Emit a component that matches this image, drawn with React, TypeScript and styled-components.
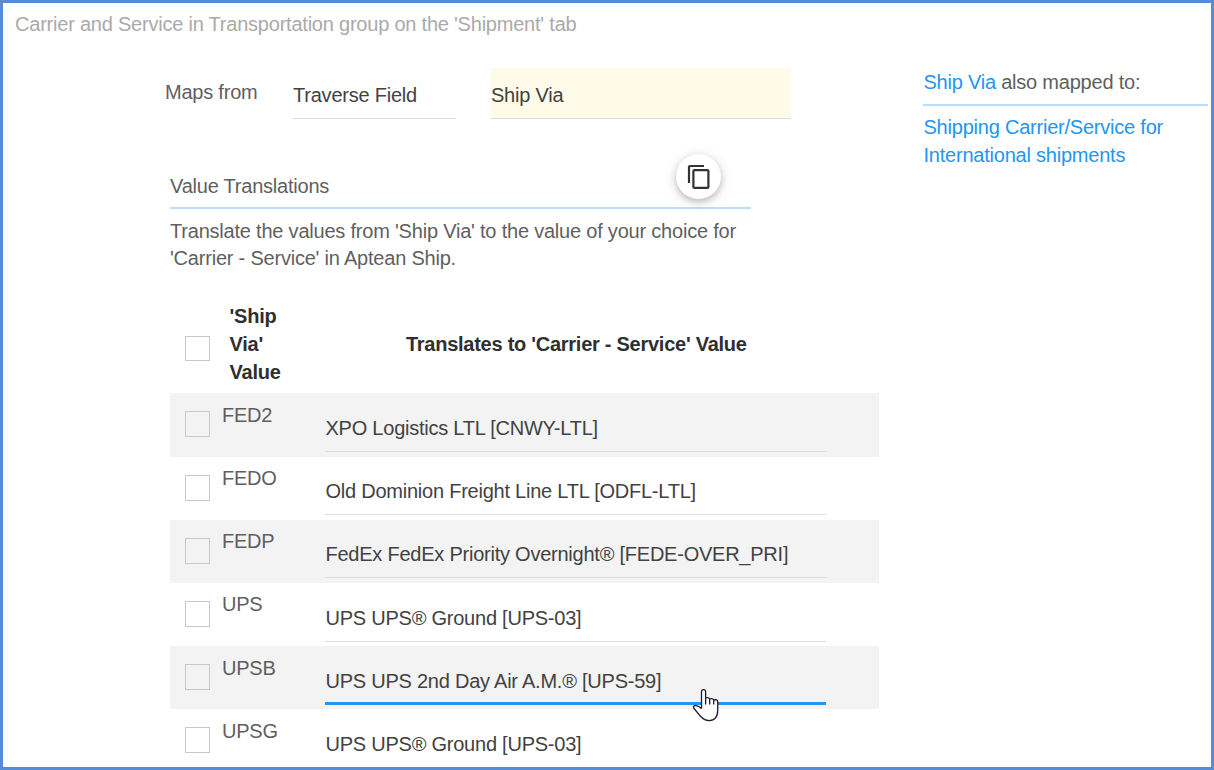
import React from "react";
import styled, { createGlobalStyle } from "styled-components";

const GlobalStyle = createGlobalStyle`
  *, *::before, *::after { box-sizing: border-box; }
  body {
    margin: 0;
    overflow: hidden;
    background: #fff;
    color: #5f5f5f;
    font: 20px/28px "Liberation Sans", Arial, sans-serif;
    letter-spacing: -0.22px;
  }
`;

const Frame = styled.div`
  width: 1214px;
  height: 770px;
  border: 3px solid #548cd5;
  overflow: hidden;
  display: flex;
  flex-direction: column;
  position: relative;
`;

const Title = styled.div`
  padding: 7px 0 0 12px;
  height: 65px;
  flex: none;
  color: #aaa;
  white-space: nowrap;
`;

const Columns = styled.div`
  display: flex;
  align-items: flex-start;
`;

const Main = styled.main`
  width: 920px;
  flex: none;
`;

const MapsRow = styled.div`
  display: flex;
  padding-left: 162px;
`;

const MapsLabel = styled.div`
  width: 128px;
  padding-top: 10px;
`;

const Field = styled.div<{ $width: number; $highlight?: boolean }>`
  width: ${(p) => p.$width}px;
  height: 51px;
  padding-top: 13px;
  margin-right: 35px;
  color: #424242;
  background: ${(p) => (p.$highlight ? "#fffbe8" : "transparent")};
  border-bottom: 1px solid #dcdcdc;
`;

const Section = styled.section`
  margin: 35px 0 0 167px;
`;

const SectionHeader = styled.div`
  width: 581px;
  height: 55px;
  display: flex;
  justify-content: space-between;
  padding-right: 30px;
  border-bottom: 2px solid #bbdefb;
`;

const SectionTitle = styled.div`
  padding-top: 18px;
`;

const CopyButton = styled.button`
  width: 45px;
  height: 45px;
  border: 0;
  padding: 0;
  border-radius: 50%;
  background: #fff;
  display: grid;
  place-items: center;
  box-shadow: 0 3px 6px rgba(0, 0, 0, 0.2), 0 2px 14px rgba(0, 0, 0, 0.12);
`;

const Description = styled.p`
  margin: 9px 0 0;
  width: 590px;
  line-height: 27px;
  letter-spacing: -0.21px;
`;

const Table = styled.div`
  width: 709px;
  margin-top: 30.4px;
`;

const HeaderRow = styled.div`
  display: flex;
  height: 91px;
  color: #2f2f2f;
  font-weight: bold;
  letter-spacing: -0.26px;
`;

const KeyHeading = styled.div`
  width: 76px;
  margin-left: 19.6px;
`;

const ValueHeading = styled.div`
  padding: 28px 0 0 100.4px;
  white-space: nowrap;
`;

const Row = styled.div<{ $striped: boolean }>`
  display: flex;
  height: 63.2px;
  background: ${(p) => (p.$striped ? "#f3f3f3" : "transparent")};
`;

const CheckBox = styled.span<{ $top: number }>`
  flex: none;
  width: 25px;
  height: ${(p) => (p.$top > 20 ? 25 : 26)}px;
  margin: ${(p) => p.$top}px 0 0 15px;
  border: 1px solid #c8c8c8;
`;

const Code = styled.div`
  width: 103px;
  padding: 7.4px 0 0 12px;
`;

const ValueField = styled.div<{ $active: boolean }>`
  width: 501px;
  height: ${(p) => (p.$active ? 59 : 58.6)}px;
  padding: 20.6px 0 0 0.5px;
  margin-left: 12px;
  color: #424242;
  letter-spacing: -0.235px;
  border-bottom: ${(p) => (p.$active ? "3px solid #2196f3" : "1px solid #dcdcdc")};
`;

const Aside = styled.aside`
  width: 285px;
`;

const AsideTitle = styled.div`
  height: 38px;
  padding-left: 0.5px;
  border-bottom: 2px solid #bbdefb;
`;

const Link = styled.a`
  color: #2196f3;
`;

const AsideLinks = styled.div`
  padding: 7px 0 0 0.5px;
`;

const Pointer = styled.svg`
  position: absolute;
  left: 689px;
  top: 685px;
`;

const ROWS = [
  ["FED2", "XPO Logistics LTL [CNWY-LTL]"],
  ["FEDO", "Old Dominion Freight Line LTL [ODFL-LTL]"],
  ["FEDP", "FedEx FedEx Priority Overnight® [FEDE-OVER_PRI]"],
  ["UPS", "UPS UPS® Ground [UPS-03]"],
  ["UPSB", "UPS UPS 2nd Day Air A.M.® [UPS-59]"],
  ["UPSG", "UPS UPS® Ground [UPS-03]"],
];

export default function App() {
  return (
    <Frame>
      <GlobalStyle />
      <Title>Carrier and Service in Transportation group on the 'Shipment' tab</Title>
      <Columns>
        <Main>
          <MapsRow>
            <MapsLabel>Maps from</MapsLabel>
            <Field $width={163}>Traverse Field</Field>
            <Field $width={300} $highlight>Ship Via</Field>
          </MapsRow>
          <Section>
            <SectionHeader>
              <SectionTitle>Value Translations</SectionTitle>
              <CopyButton aria-label="Copy">
                <svg width="23" height="25" viewBox="0 0 23 25" fill="none" stroke="#333" strokeWidth="2.2">
                  <path d="M2 19V3.2Q2 2 3.2 2H17" />
                  <rect x="6.4" y="6.1" width="15" height="17.8" rx="1" />
                </svg>
              </CopyButton>
            </SectionHeader>
            <Description>
              Translate the values from 'Ship Via' to the value of your choice for
              <br />
              'Carrier - Service' in Aptean Ship.
            </Description>
            <Table>
              <HeaderRow>
                <CheckBox $top={34} />
                <KeyHeading>'Ship<br />Via'<br />Value</KeyHeading>
                <ValueHeading>Translates to 'Carrier - Service' Value</ValueHeading>
              </HeaderRow>
              {ROWS.map(([code, value], i) => (
                <Row key={code} $striped={i % 2 === 0}>
                  <CheckBox $top={18} />
                  <Code>{code}</Code>
                  <ValueField $active={i === 4}>{value}</ValueField>
                </Row>
              ))}
            </Table>
          </Section>
        </Main>
        <Aside>
          <AsideTitle><Link>Ship Via</Link> also mapped to:</AsideTitle>
          <AsideLinks><Link>Shipping Carrier/Service for<br />International shipments</Link></AsideLinks>
        </Aside>
      </Columns>
      <Pointer width="28" height="36" viewBox="0 0 28 36">
        <path
          d="M9.5 20.5V3.7Q9.5 1.6 11.5 1.6T13.6 3.7V10Q16.7 9 17.7 11Q20.7 9.8 21.7 12Q25.5 11 25.7 13.8V22Q25.8 32.6 17 32.6Q12.5 32.6 9 28.8L2 20.5Q.8 18.5 2.5 17.7Q4.5 17.2 6.5 18.5L9.5 20.5M13.6 10V16.5M17.7 11V16.5M21.7 12V16.5"
          fill="#fff" stroke="#1b1b2b" strokeWidth="1.3" strokeLinejoin="round"
        />
      </Pointer>
    </Frame>
  );
}
